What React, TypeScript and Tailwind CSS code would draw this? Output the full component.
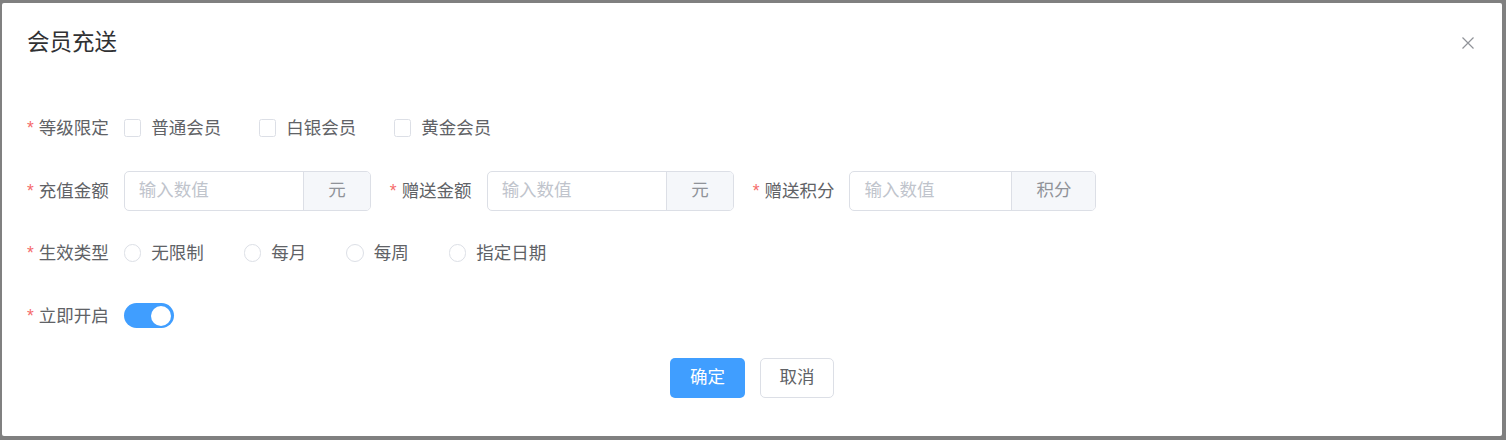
import { useState } from "react";

const font = "font-['Liberation_Sans','Noto_Sans_CJK_SC',sans-serif]";

function Label({ text }: { text: string }) {
  return (
    <div className="flex items-center pr-[15px] text-[17.5px] leading-[40px] text-[#606266]">
      <span className="mr-[5px] text-[#f56c6c]">*</span>
      {text}
    </div>
  );
}

function Checkbox({ text }: { text: string }) {
  return (
    <label className="mr-[37.5px] flex items-center text-[17.5px] text-[#606266]">
      <span className="h-[17.5px] w-[17.5px] rounded-[2.5px] border border-[#dcdfe6] bg-white" />
      <span className="pl-[10px]">{text}</span>
    </label>
  );
}

function Radio({ text }: { text: string }) {
  return (
    <label className="mr-[40px] flex items-center text-[17.5px] text-[#606266]">
      <span className="h-[17.5px] w-[17.5px] rounded-full border border-[#dcdfe6] bg-white" />
      <span className="pl-[10px]">{text}</span>
    </label>
  );
}

function NumberInput({ unit }: { unit: string }) {
  return (
    <div className="flex h-[40px] w-[247px] overflow-hidden rounded-[5px] border border-[#dcdfe6] text-[17.5px]">
      <div className="flex flex-1 items-center pl-[14px] text-[#c0c4cc]">输入数值</div>
      <div className="flex items-center border-l border-[#dcdfe6] bg-[#f5f7fa] px-[24px] text-[#909399]">
        {unit}
      </div>
    </div>
  );
}

export default function App() {
  const [on, setOn] = useState(true);

  return (
    <div className={`h-[440px] w-[1506px] bg-[#808080] pl-[2px] pt-[3px] ${font}`}>
      <div className="flex h-[433px] w-[1500px] flex-col rounded-[2px] bg-white">
        <div className="flex items-center justify-between pb-[12.5px] pl-[25px] pr-[28px] pt-[25px]">
          <h2 className="text-[22.5px] leading-[30px] text-[#303133]">会员充送</h2>
          <button className="flex h-[12px] w-[12px] items-center justify-center">
            <svg width="12" height="12" viewBox="0 0 12 12" fill="none">
              <path d="M0.5 0.5L11.5 11.5M11.5 0.5L0.5 11.5" stroke="#909399" strokeWidth="1.2" />
            </svg>
          </button>
        </div>

        <div className="flex flex-col gap-[22.5px] pl-[25px] pt-[37.5px]">
          <div className="flex h-[40px] items-center">
            <Label text="等级限定" />
            <Checkbox text="普通会员" />
            <Checkbox text="白银会员" />
            <Checkbox text="黄金会员" />
          </div>

          <div className="flex h-[40px] items-center gap-[19px]">
            <div className="flex items-center">
              <Label text="充值金额" />
              <NumberInput unit="元" />
            </div>
            <div className="flex items-center">
              <Label text="赠送金额" />
              <NumberInput unit="元" />
            </div>
            <div className="flex items-center">
              <Label text="赠送积分" />
              <NumberInput unit="积分" />
            </div>
          </div>

          <div className="flex h-[40px] items-center">
            <Label text="生效类型" />
            <Radio text="无限制" />
            <Radio text="每月" />
            <Radio text="每周" />
            <Radio text="指定日期" />
          </div>

          <div className="flex h-[40px] items-center">
            <Label text="立即开启" />
            <button
              onClick={() => setOn(!on)}
              className={`flex h-[25px] w-[50px] items-center rounded-full px-[2.5px] ${
                on ? "justify-end bg-[#409eff]" : "justify-start bg-[#dcdfe6]"
              }`}
            >
              <span className="h-[20px] w-[20px] rounded-full bg-white" />
            </button>
          </div>
        </div>

        <div className="mt-[22px] flex justify-center gap-[15px] text-[17.5px]">
          <button className="h-[40px] w-[75px] rounded-[5px] bg-[#409eff] text-white">确定</button>
          <button className="h-[40px] w-[74px] rounded-[5px] border border-[#dcdfe6] bg-white text-[#606266]">
            取消
          </button>
        </div>
      </div>
    </div>
  );
}
